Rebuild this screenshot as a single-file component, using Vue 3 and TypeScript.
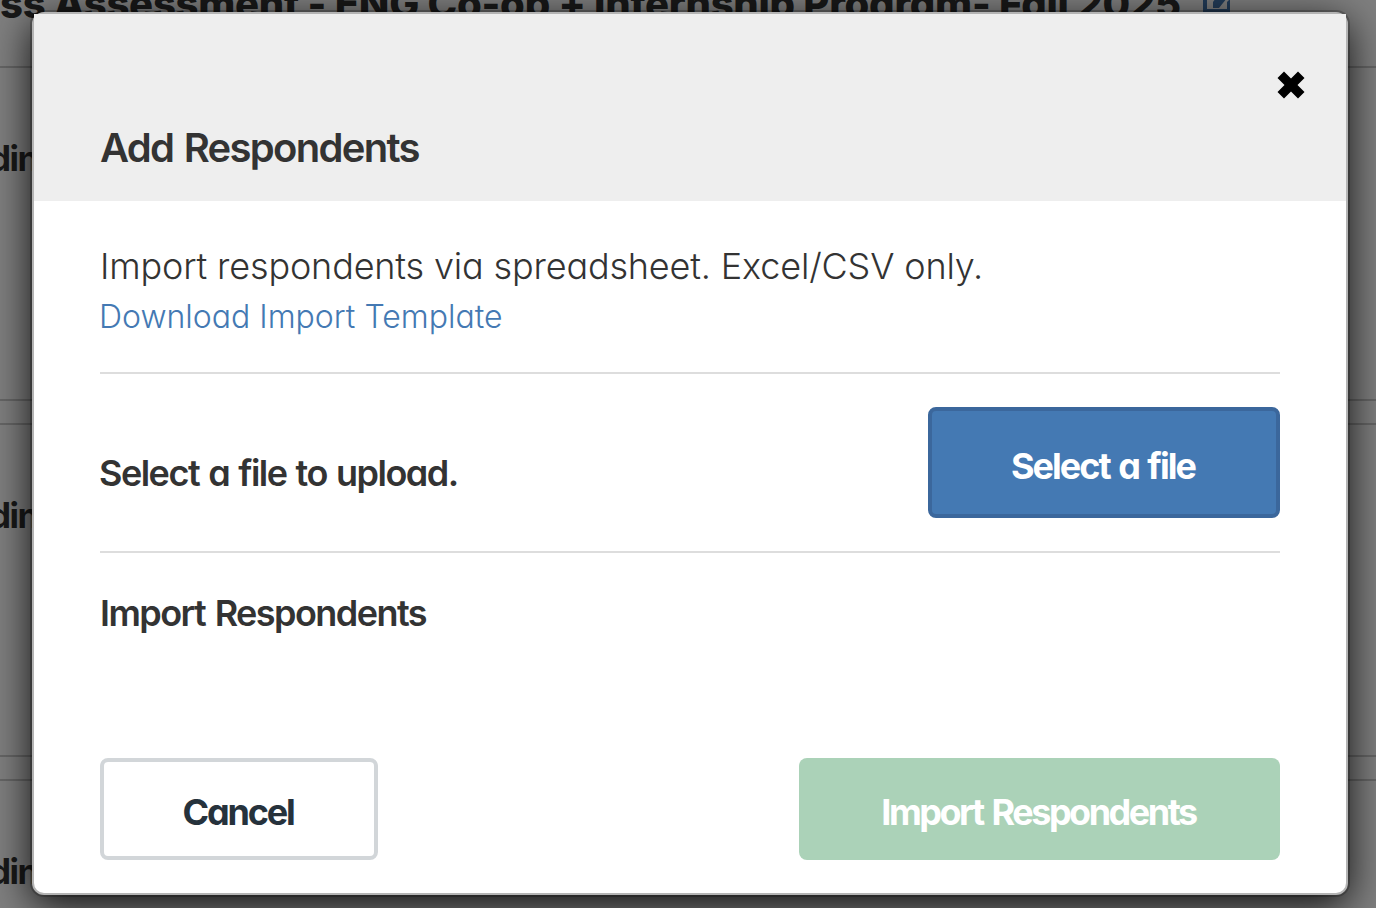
<script setup lang="ts">
interface Card {
  id: number
  label: string
}

const pageTitle = 'ss Assessment - ENG Co-op + Internship Program- Fall 2025'
const cards: Card[] = [
  { id: 1, label: 'din' },
  { id: 2, label: 'din' },
  { id: 3, label: 'din' },
]
</script>

<template>
  <div class="page">
    <header class="page-head">
      <span class="page-title">{{ pageTitle }}</span>
      <svg class="edit-icon" viewBox="0 0 28 28" aria-hidden="true">
        <path d="M0 0H4V25H24V18L27 15V28H0Z" fill="currentColor" />
        <path d="M10 24V18L20 4H28V9L16 24Z" fill="currentColor" />
      </svg>
    </header>
    <section v-for="card in cards" :key="card.id" class="page-card">
      <span class="card-label">{{ card.label }}</span>
    </section>

    <div class="overlay">
      <div class="modal" role="dialog" aria-labelledby="modal-title">
        <header class="modal-head">
          <button class="close" type="button" aria-label="Close">
            <svg viewBox="0 0 28 28">
              <path d="M7 .5L14 7.500L21 .5L27.500 7L20.500 14L27.500 21L21 27.500L14 20.500L7 27.500L.5 21L7.500 14L.5 7Z" fill="currentColor" />
            </svg>
          </button>
          <h1 id="modal-title"><span class="t-title">Add Respondents</span></h1>
        </header>
        <div class="modal-body">
          <div class="intro">
            <p><span class="t-intro">Import respondents via spreadsheet. Excel/CSV only.</span></p>
            <a class="t-link">Download Import Template</a>
          </div>
          <div class="upload">
            <span class="t-upload">Select a file to upload.</span>
            <button class="btn btn-primary" type="button"><span class="t-select">Select a file</span></button>
          </div>
          <h2><span class="t-import">Import Respondents</span></h2>
          <footer class="actions">
            <button class="btn btn-cancel" type="button"><span class="t-cancel">Cancel</span></button>
            <button class="btn btn-import" type="button"><span class="t-submit">Import Respondents</span></button>
          </footer>
        </div>
      </div>
    </div>
  </div>
</template>

<style>
body {
  margin: 0;
  overflow: hidden;
}
</style>

<style scoped>
* {
  box-sizing: border-box;
}
.page {
  position: relative;
  width: 1376px;
  height: 908px;
  overflow: hidden;
  background: #fff;
  color: #333;
  font-family: Inter, "Liberation Sans", sans-serif;
  font-feature-settings: "cv11" 1;
}
.page-head {
  display: flex;
  height: 68px;
  border-bottom: 2px solid #ccc;
}
.page-title {
  height: 40px;
  margin-top: -18px;
  line-height: 44px;
  font-size: 40px;
  font-weight: 800;
  letter-spacing: -0.25px;
  white-space: nowrap;
}
.edit-icon {
  width: 28px;
  height: 28px;
  margin: -16px 0 0 22px;
  color: #4479b3;
}
.page-card {
  height: 333px;
  margin-bottom: 22px;
  padding-top: 68px;
  border-bottom: 2px solid #ccc;
}
.page-card + .page-card {
  height: 334px;
  border-top: 2px solid #ccc;
}
.card-label {
  display: block;
  margin-left: -11px;
  line-height: 44px;
  font-size: 35px;
  font-weight: 700;
  letter-spacing: -1.5px;
}
.overlay {
  position: absolute;
  inset: 0;
  padding: 12px 28px 13px 32px;
  background: rgba(0, 0, 0, 0.5);
}
.modal {
  height: 883px;
  border: 2px solid #b4b4b4;
  border-radius: 12px;
  background: #fff;
  box-shadow: 0 0 0 2px rgba(0, 0, 0, 0.2), 0 10px 40px rgba(0, 0, 0, 0.9);
}
.modal-head {
  display: flex;
  flex-direction: column;
  height: 187px;
  padding: 57px 41px 0 66px;
  background: #eee;
}
.close {
  align-self: flex-end;
  width: 28px;
  height: 28px;
  padding: 0;
  border: 0;
  background: none;
  color: #000;
}
.close svg {
  display: block;
  width: 28px;
  height: 28px;
}
h1,
h2,
p {
  margin: 0;
  line-height: 44px;
  white-space: nowrap;
}
h1 {
  margin-top: 27px;
  font-size: 40px;
  font-weight: 600;
  letter-spacing: -1.7px;
  word-spacing: 2px;
}
.modal-body {
  padding: 0 66px;
}
.intro {
  height: 173px;
  padding-top: 43px;
  border-bottom: 2px solid #ddd;
}
.intro p {
  font-size: 36px;
  font-weight: 300;
  letter-spacing: -0.16px;
}
.t-link {
  display: inline-block;
  margin-top: 9px;
  margin-left: -1px;
  line-height: 40px;
  color: #4479b3;
  font-size: 32px;
  font-weight: 300;
  white-space: nowrap;
}
.upload {
  display: flex;
  align-items: center;
  justify-content: space-between;
  height: 179px;
  border-bottom: 2px solid #ddd;
  font-size: 36px;
  font-weight: 600;
}
.t-upload {
  margin-left: -1px;
  padding-top: 20px;
  letter-spacing: -1.5px;
  word-spacing: 1.5px;
}
.btn {
  display: flex;
  align-items: center;
  justify-content: center;
  padding: 6px 0 0;
  border: 4px solid transparent;
  border-radius: 8px;
  color: #fff;
  font: inherit;
  font-size: 36px;
  font-weight: 700;
  font-feature-settings: inherit;
  white-space: nowrap;
}
.btn-primary {
  width: 352px;
  height: 111px;
  border-color: #3b679c;
  background: #4479b3;
}
.t-select {
  margin-right: 2px;
  letter-spacing: -2px;
  word-spacing: 2px;
}
.t-cancel {
  margin-right: 2px;
  letter-spacing: -2.2px;
}
.t-submit {
  margin-right: 2px;
  letter-spacing: -2.5px;
  word-spacing: 3px;
}
h2 {
  margin-top: 38px;
  font-size: 36px;
  font-weight: 600;
  letter-spacing: -1.55px;
  word-spacing: 2px;
}
.actions {
  display: flex;
  justify-content: space-between;
  margin-top: 123px;
}
.btn-cancel {
  width: 278px;
  height: 102px;
  border-color: #d2d6d9;
  background: #fff;
  color: #26323c;
}
.btn-import {
  width: 481px;
  height: 102px;
  border: 0;
  background: #abd2b8;
}
</style>
